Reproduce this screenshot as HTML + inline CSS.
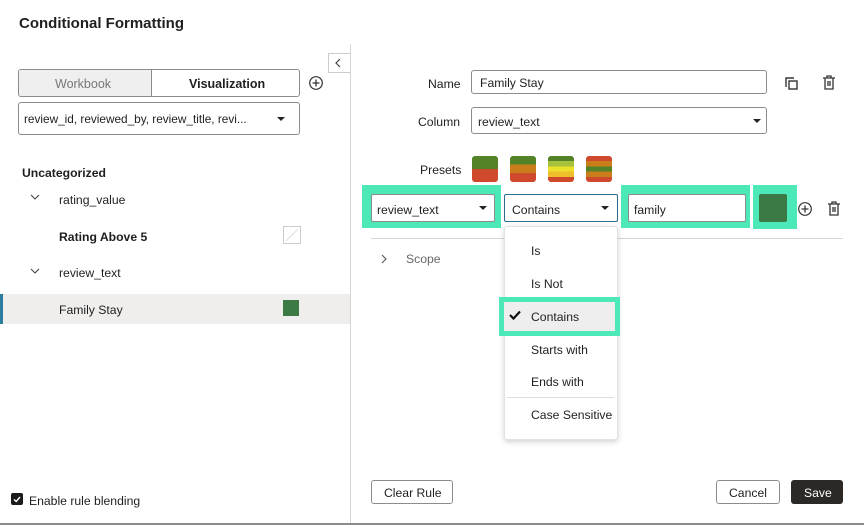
<!DOCTYPE html>
<html><head><style>
*{box-sizing:border-box;margin:0;padding:0}
body{width:864px;height:525px;background:#fff;font-family:"Liberation Sans",sans-serif;font-size:12.2px;color:#1f1f1f;position:relative;overflow:hidden}
.a{position:absolute}
.t{position:absolute;white-space:nowrap;line-height:1;margin-top:1px}
.box{position:absolute;border:1px solid #8c8c8c;border-radius:3px;background:#fff}
.caret{position:absolute;width:0;height:0;border-left:4px solid transparent;border-right:4px solid transparent;border-top:4px solid #222}
.teal{position:absolute;background:#4de8b7}
</style></head><body>
<div class="t" style="left:19px;top:15px;font-size:15px;font-weight:bold">Conditional Formatting</div>
<div class="a" style="left:350px;top:44px;width:1px;height:481px;background:#d6d6d6"></div>
<div class="a" style="left:0;top:523px;width:864px;height:2px;background:#8a8a8a"></div>
<div class="a" style="left:328px;top:53px;width:22px;height:20px;border:1px solid #ccc;border-right:none;background:#fff"></div>
<svg class="a" style="left:334px;top:57px" width="10" height="12"><path d="M6 2L2 6L6 10" stroke="#444" fill="none" stroke-width="1.2"/></svg>
<div class="box" style="left:18px;top:69px;width:282px;height:28px;border-color:#8c8c8c;overflow:hidden">
<div class="a" style="left:0;top:0;width:133px;height:26px;background:#efefef;border-right:1px solid #8c8c8c"></div>
</div>
<div class="t" style="left:55px;top:77px;color:#777;font-size:12.5px">Workbook</div>
<div class="t" style="left:189px;top:77px;font-weight:bold;font-size:12.5px">Visualization</div>
<svg class="a" style="left:308px;top:75px" width="16" height="16"><circle cx="8" cy="8" r="6.3" stroke="#333" fill="none" stroke-width="1.2"/><path d="M8 4.5V11.5M4.5 8H11.5" stroke="#333" stroke-width="1.3"/></svg>
<div class="box" style="left:18px;top:102px;width:282px;height:33px"></div>
<div class="t" style="left:24px;top:113px;font-size:11.8px">review_id, reviewed_by, review_title, revi...</div>
<div class="caret" style="left:277px;top:117px"></div>
<div class="t" style="left:22px;top:166px;font-weight:bold">Uncategorized</div>
<svg class="a" style="left:29px;top:193px" width="12" height="8"><path d="M2 2L6 6L10 2" stroke="#444" fill="none" stroke-width="1.1"/></svg>
<div class="t" style="left:59px;top:193px">rating_value</div>
<div class="t" style="left:59px;top:230px;font-weight:bold">Rating Above 5</div>
<div class="a" style="left:283px;top:226px;width:18px;height:18px;border:1px solid #ccc"></div>
<svg class="a" style="left:283px;top:226px" width="18" height="18"><path d="M3 15L15 3" stroke="#ddd"/></svg>
<svg class="a" style="left:29px;top:267px" width="12" height="8"><path d="M2 2L6 6L10 2" stroke="#444" fill="none" stroke-width="1.1"/></svg>
<div class="t" style="left:59px;top:266px">review_text</div>
<div class="a" style="left:0;top:294px;width:350px;height:30px;background:#efeeed"></div>
<div class="a" style="left:0;top:294px;width:3px;height:30px;background:#2e7ba0"></div>
<div class="t" style="left:59px;top:303px">Family Stay</div>
<div class="a" style="left:283px;top:300px;width:16px;height:16px;background:#3b7a45"></div>
<div class="a" style="left:11px;top:493px;width:12px;height:12px;background:#1a1a1a;border-radius:2px"></div>
<svg class="a" style="left:11px;top:493px" width="12" height="12"><path d="M3 6.5L5.2 8.5L9 4" stroke="#fff" fill="none" stroke-width="1.4"/></svg>
<div class="t" style="left:29px;top:494px">Enable rule blending</div>
<div class="t" style="left:428px;top:77px">Name</div>
<div class="box" style="left:471px;top:70px;width:296px;height:24px"></div>
<div class="t" style="left:480px;top:76px">Family Stay</div>
<svg class="a" style="left:783px;top:75px" width="16" height="16"><path d="M3 12V3H11" stroke="#333" fill="none" stroke-width="1.4"/><rect x="6" y="6" width="8" height="8" stroke="#333" fill="none" stroke-width="1.4"/></svg>
<svg class="a" style="left:821px;top:74px" width="16" height="17"><path d="M2 4H14M6 4V2H10V4M4 4V15H12V4M7 7V12M9 7V12" stroke="#333" fill="none" stroke-width="1.3"/></svg>
<div class="t" style="left:418px;top:115px">Column</div>
<div class="box" style="left:471px;top:107px;width:296px;height:27px"></div>
<div class="t" style="left:478px;top:115px">review_text</div>
<div class="caret" style="left:753px;top:119px"></div>
<div class="t" style="left:420px;top:163px">Presets</div>
<div class="a" style="left:472px;top:156px;width:26px;height:26px;border-radius:3px;overflow:hidden;background:linear-gradient(#538227 0 50%,#cf4a2d 50%)"></div>
<div class="a" style="left:510px;top:156px;width:26px;height:26px;border-radius:3px;overflow:hidden;background:linear-gradient(#538227 0 33%,#c97d1b 33% 66%,#cf4a2d 66%)"></div>
<div class="a" style="left:548px;top:156px;width:26px;height:26px;border-radius:3px;overflow:hidden;background:linear-gradient(#538227 0 20%,#a5c13d 20% 40%,#ebe02a 40% 60%,#efbe2c 60% 80%,#cf4a2d 80%)"></div>
<div class="a" style="left:586px;top:156px;width:26px;height:26px;border-radius:3px;overflow:hidden;background:linear-gradient(#cf4a2d 0 20%,#c97d1b 20% 40%,#538227 40% 60%,#c97d1b 60% 80%,#cf4a2d 80%)"></div>
<div class="teal" style="left:362px;top:185px;width:139px;height:43px"></div>
<div class="box" style="left:371px;top:194px;width:124px;height:28px;border-radius:2px"></div>
<div class="t" style="left:377px;top:203px">review_text</div>
<div class="caret" style="left:479px;top:206px"></div>
<div class="box" style="left:504px;top:194px;width:114px;height:28px;border-color:#2a6f96;border-width:1.5px;border-radius:2px"></div>
<div class="t" style="left:512px;top:203px">Contains</div>
<div class="caret" style="left:601px;top:206px"></div>
<div class="teal" style="left:621px;top:185px;width:129px;height:43px"></div>
<div class="box" style="left:628px;top:194px;width:118px;height:28px;border-radius:2px"></div>
<div class="t" style="left:634px;top:203px">family</div>
<div class="teal" style="left:753px;top:185px;width:44px;height:44px"></div>
<div class="a" style="left:759px;top:194px;width:28px;height:28px;background:#3b7a45;border-radius:2px"></div>
<svg class="a" style="left:797px;top:201px" width="16" height="16"><circle cx="8" cy="8" r="6.3" stroke="#333" fill="none" stroke-width="1.2"/><path d="M8 4.5V11.5M4.5 8H11.5" stroke="#333" stroke-width="1.3"/></svg>
<svg class="a" style="left:826px;top:200px" width="16" height="17"><path d="M2 4H14M6 4V2H10V4M4 4V15H12V4M7 7V12M9 7V12" stroke="#333" fill="none" stroke-width="1.3"/></svg>
<div class="a" style="left:371px;top:238px;width:472px;height:1px;background:#d6d6d6"></div>
<svg class="a" style="left:380px;top:253px" width="8" height="12"><path d="M2 2L6 6L2 10" stroke="#555" fill="none" stroke-width="1.1"/></svg>
<div class="t" style="left:406px;top:252px;color:#666">Scope</div>
<div class="a" style="left:504px;top:226px;width:114px;height:214px;background:#fff;border:1px solid #e2e2e2;border-radius:3px;box-shadow:0 2px 6px rgba(0,0,0,.18)"></div>
<div class="t" style="left:531px;top:244px">Is</div>
<div class="t" style="left:531px;top:277px">Is Not</div>
<div class="teal" style="left:499px;top:297px;width:121px;height:39px"></div>
<div class="a" style="left:504px;top:302px;width:111px;height:29px;background:#eeeeee"></div>
<svg class="a" style="left:508px;top:309px" width="14" height="12"><path d="M2 6L5.5 9.5L12 2.5" stroke="#111" fill="none" stroke-width="2.2"/></svg>
<div class="t" style="left:531px;top:310px">Contains</div>
<div class="t" style="left:531px;top:343px">Starts with</div>
<div class="t" style="left:531px;top:375px">Ends with</div>
<div class="a" style="left:507px;top:397px;width:107px;height:1px;background:#ddd"></div>
<div class="t" style="left:531px;top:408px">Case Sensitive</div>
<div class="box" style="left:371px;top:480px;width:82px;height:24px"></div>
<div class="t" style="left:384px;top:486px">Clear Rule</div>
<div class="box" style="left:716px;top:480px;width:64px;height:24px"></div>
<div class="t" style="left:729px;top:486px">Cancel</div>
<div class="a" style="left:791px;top:480px;width:52px;height:24px;background:#2b2826;border-radius:3px"></div>
<div class="t" style="left:804px;top:486px;color:#fff">Save</div>
</body></html>
